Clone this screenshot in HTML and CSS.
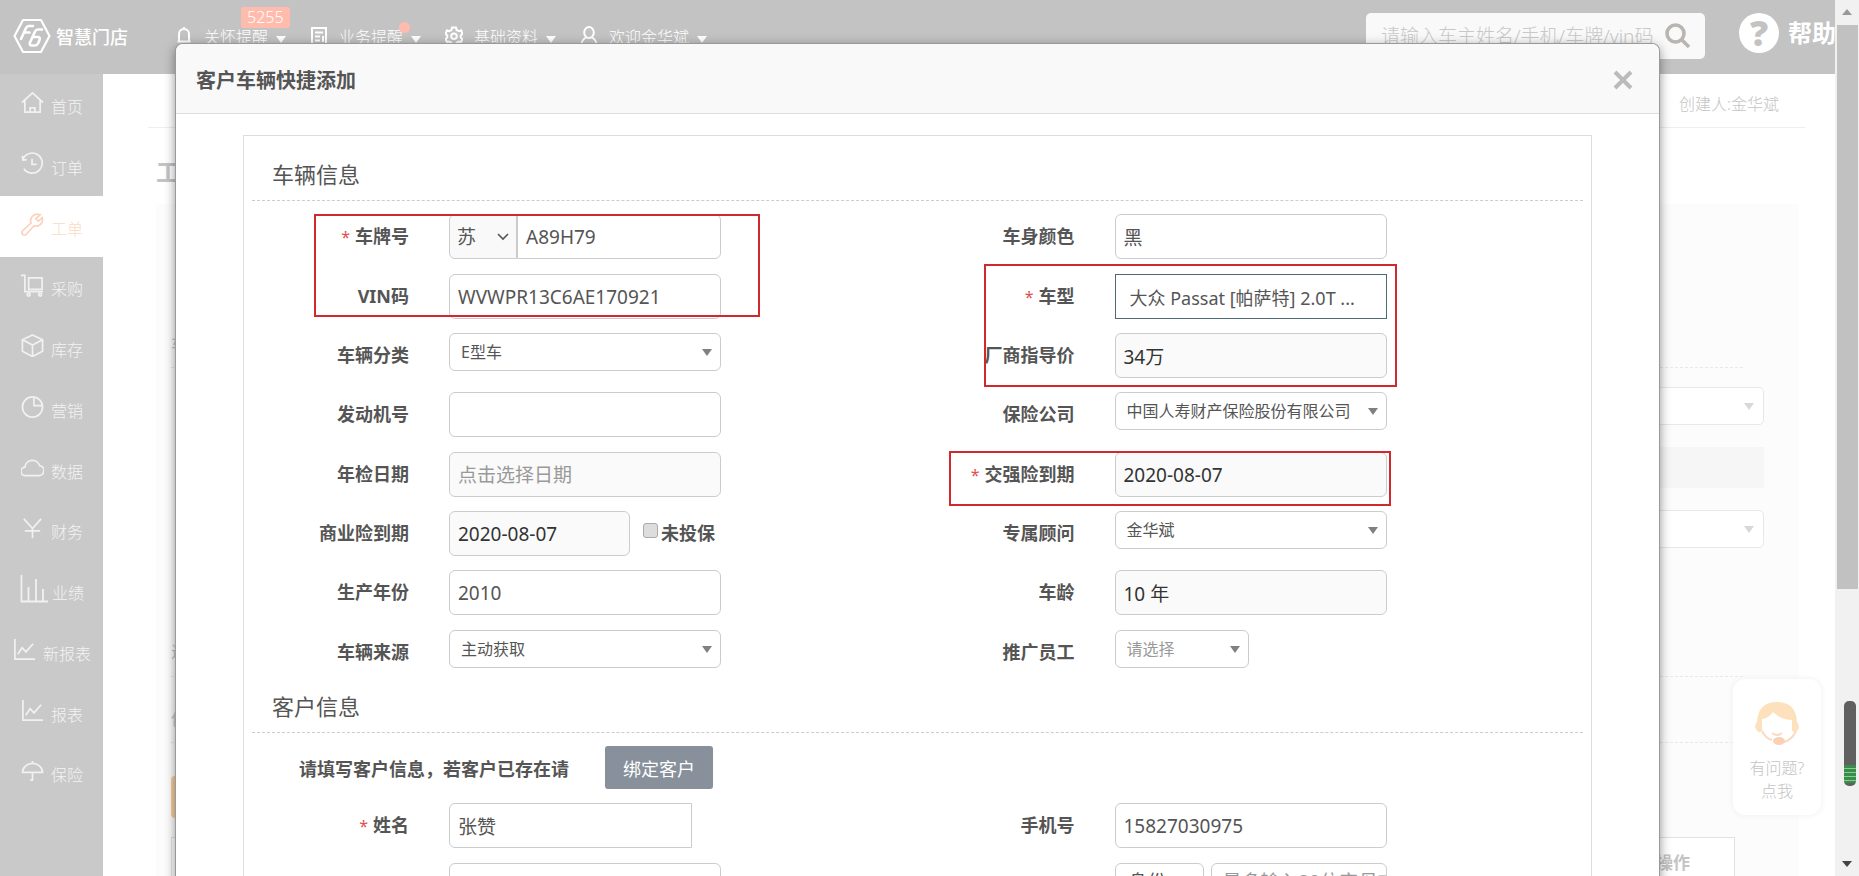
FILE: index.html
```html
<!DOCTYPE html>
<html lang="zh-CN">
<head>
<meta charset="utf-8">
<title>智慧门店</title>
<link rel="stylesheet" href="styles.css">
</head>
<body>
<div class="app">
  <div class="page">
    <header class="topbar">
      <a class="brand" href="#">
        <svg class="brand-mark" viewBox="0 0 38 36" fill="none" stroke="#fff" stroke-width="2.2" stroke-linejoin="round" stroke-linecap="round">
          <path d="M10 2H28L36.500 18L28 34H10L1.500 18Z"/>
          <path d="M8 21L13 10Q14 8 16 8H20M11 14.500H16.500" stroke-width="2.600"/>
          <path d="M29 11.500H25Q23 11.500 22 13.500L17 24.500Q16 27.500 19 27.500H22Q24 27.500 25 25.500L26.500 22Q27.500 19 25 19H20" stroke-width="2.600"/>
        </svg>
        <span>智慧门店</span>
      </a>
      <nav class="topnav">
        <a href="#"><svg viewBox="0 0 18 20"><path d="M2.500 15.500H15.500M4 15V8A5 5 0 0 1 14 8V15M9 1V3M7 18.500H11"/></svg><span>关怀提醒</span><i class="caret"></i><b class="badge">5255</b></a>
        <a href="#"><svg viewBox="0 0 18 20"><path d="M2 2H16V19H2ZM5 6.500H13M5 10.500H10M5 14.500H10M13 10V16"/></svg><span>业务提醒</span><i class="caret"></i><b class="dot"></b></a>
        <a href="#"><svg viewBox="0 0 18 20"><path d="M7 1.500H11L11.600 4L14 5.200L16.200 4.300L17.500 7.800L15.700 9.500V11.500L17.500 13L16 16L13.500 15.500L11.600 16.600L11 19H7L6.400 16.600L4.300 15.500L2 16L.5 13L2.300 11.500V9.500L.5 7.800L2 4.300L4.300 5.200L6.400 4Z"/><circle cx="9" cy="10.300" r="2.800"/></svg><span>基础资料</span><i class="caret"></i></a>
        <a href="#"><svg viewBox="0 0 18 20"><ellipse cx="9" cy="6.500" rx="4.800" ry="5.500"/><path d="M6 11.500Q1.500 14 1.500 19M12 11.500Q16.500 14 16.500 19"/></svg><span>欢迎金华斌</span><i class="caret"></i></a>
      </nav>
      <div class="search">
        <input type="text" aria-label="搜索" placeholder="请输入车主姓名/手机/车牌/vin码">
        <button aria-label="搜索"><svg viewBox="0 0 26 26" fill="none" stroke="#b9b5b1" stroke-width="3.600"><circle cx="10.500" cy="10.500" r="8.500"/><path d="M17 17L24 24"/></svg></button>
      </div>
      <a class="help" href="#"><b class="help-mark">?</b><span>帮助</span></a>
    </header>
    <div class="main">
      <nav class="sidebar">
        <a href="#"><svg viewBox="0 0 24 24"><path d="M1 12L12 2L23 12M4 10V22H20V10M9.500 22V17.500H14.500V22"/></svg>首页</a>
        <a href="#"><svg viewBox="0 0 24 24"><path d="M2 7.500A10.500 10.500 0 1 1 3 17.500M1.500 4L2 8.500L6 8M11.500 7V13H16.500"/></svg>订单</a>
        <a class="active" href="#"><svg viewBox="0 0 24 24"><path d="M20 1.800A7 7 0 0 0 10.500 10.500L1.800 18.500A2.600 2.600 0 0 0 5.500 22.200L13.500 13.500A7 7 0 0 0 22.200 5L18 8.500L15.500 6Z"/></svg>工单</a>
        <a href="#"><svg viewBox="0 0 24 24"><path d="M0 1.500H4V18.500H23M8 4H22V16H8Z"/><circle cx="8" cy="21.500" r="1.500"/><circle cx="20" cy="21.500" r="1.500"/></svg>采购</a>
        <a href="#"><svg viewBox="0 0 24 24"><path d="M12 1L22.500 6V18L12 23.500L1.500 18V6ZM1.500 6L12 11.500L22.500 6M12 11.500V23.500"/></svg>库存</a>
        <a href="#"><svg viewBox="0 0 24 24"><circle cx="12" cy="12.500" r="10.500"/><path d="M13.500 2V11H22.500"/></svg>营销</a>
        <a href="#"><svg viewBox="0 0 24 24"><path d="M5 20.500A4.500 4.500 0 0 1 4 11.500A8 8 0 0 1 19.500 10A5.300 5.300 0 0 1 19 20.500Z"/></svg>数据</a>
        <a href="#"><svg viewBox="0 0 24 24"><path d="M3 2L12 12L21 2M12 12V22M4 14.500H20"/></svg>财务</a>
        <a class="chart" href="#"><svg viewBox="0 0 28 28"><path d="M1.500 0V26.500H28M8.500 26V12M16 26V4M23 26V14"/></svg>业绩</a>
        <a href="#"><svg viewBox="0 0 24 24"><path d="M2 1V22H23M5 17L9.500 10L13.500 14.500L21 6"/></svg>新报表</a>
        <a href="#"><svg viewBox="0 0 24 24"><path d="M2 1V22H23M5 17L9.500 10L13.500 14.500L21 6"/></svg>报表</a>
        <a href="#"><svg viewBox="0 0 24 24"><path d="M1.500 13A10.500 9.500 0 0 1 22.500 13ZM12 1V3.500M12 13V21H9.500"/></svg>保险</a>
      </nav>
      <div class="workspace">
        <div class="creator">创建人:金华斌</div>
        <h1>工单</h1>
        <div class="order">
          <div class="order-top">车</div>
          <div class="fake-select"><i class="caret"></i></div>
          <div class="fake-block"></div>
          <div class="fake-select"><i class="caret"></i></div>
          <div class="order-line first">进</div>
          <div class="order-line">信</div>
          <div class="order-action"><button aria-label="保存"></button></div>
          <table><tr><th>操作</th></tr></table>
        </div>
      </div>
    </div>

    <aside class="support">
      <svg viewBox="0 0 46 46">
        <path d="M3 22Q4 2 23 2T43 22Q47 27 43 31Q41 33 38 31V20Q27 20 19 12Q15 18 8 19V31Q4 34 2 29Q0 25 3 22Z" fill="#fde1bd"/>
        <path d="M8 31Q11 38 18 40M42 31Q38 40 30 42M18 33Q23 37 28 33" fill="none" stroke="#fbdcc2" stroke-width="2"/>
        <ellipse cx="25" cy="41" rx="6" ry="4" fill="#fbd0b4"/>
      </svg>
      <span>有问题?</span><span>点我</span>
    </aside>

    <section class="modal" role="dialog" aria-labelledby="dlg-title">
      <header class="modal-head">
        <h2 id="dlg-title">客户车辆快捷添加</h2>
        <button class="close" aria-label="关闭"><svg viewBox="0 0 20 20"><path d="M2 2L18 18M18 2L2 18"/></svg></button>
      </header>
      <form class="panel">
        <h3>车辆信息</h3>
        <div class="fields">
          <div class="field"><label for="plate"><em>*</em>车牌号</label>
            <div class="plate"><select aria-label="省份"><option>苏</option></select><svg viewBox="0 0 12 8"><path d="M1 1L6 6L11 1"/></svg><input id="plate" type="text" value="A89H79"></div></div>
          <div class="field"><label for="color">车身颜色</label><input id="color" type="text" value="黑"></div>
          <div class="field"><label for="vin">VIN码</label><input id="vin" type="text" value="WVWPR13C6AE170921"></div>
          <div class="field"><label for="model"><em>*</em>车型</label><input id="model" class="model" type="text" value="大众 Passat [帕萨特] 2.0T ..."></div>
          <div class="field"><label for="kind">车辆分类</label><div class="pick"><select id="kind"><option>E型车</option></select><i class="caret"></i></div></div>
          <div class="field"><label for="price">厂商指导价</label><input id="price" type="text" readonly value="34万"></div>
          <div class="field"><label for="engine">发动机号</label><input id="engine" type="text"></div>
          <div class="field"><label for="insurer">保险公司</label><div class="pick"><select id="insurer"><option>中国人寿财产保险股份有限公司</option></select><i class="caret"></i></div></div>
          <div class="field"><label for="check">年检日期</label><input id="check" type="text" readonly placeholder="点击选择日期"></div>
          <div class="field"><label for="force"><em>*</em>交强险到期</label><input id="force" type="text" readonly value="2020-08-07"></div>
          <div class="field"><label for="biz">商业险到期</label><div class="with-check"><input id="biz" type="text" readonly value="2020-08-07"><input id="none" type="checkbox"><label for="none">未投保</label></div></div>
          <div class="field"><label for="adviser">专属顾问</label><div class="pick"><select id="adviser"><option>金华斌</option></select><i class="caret"></i></div></div>
          <div class="field"><label for="year">生产年份</label><input id="year" type="text" value="2010"></div>
          <div class="field"><label for="age">车龄</label><input id="age" type="text" readonly value="10 年"></div>
          <div class="field"><label for="source">车辆来源</label><div class="pick"><select id="source"><option>主动获取</option></select><i class="caret"></i></div></div>
          <div class="field"><label for="staff">推广员工</label><div class="pick short"><select id="staff"><option>请选择</option></select><i class="caret"></i></div></div>
        </div>
        <h3>客户信息</h3>
        <div class="bind"><span>请填写客户信息，若客户已存在请</span><button type="button">绑定客户</button></div>
        <div class="fields">
          <div class="field"><label for="name"><em>*</em>姓名</label><input id="name" class="name" type="text" value="张赞"></div>
          <div class="field"><label for="phone">手机号</label><input id="phone" type="text" value="15827030975"></div>
          <div class="field"><span></span><input type="text" aria-label="备注"></div>
          <div class="field"><span></span><div class="idcard"><select aria-label="证件类型"><option>身份</option></select><input type="text" aria-label="证件号" placeholder="最多输入20位字母或数字"></div></div>
        </div>
        <div class="mark mark-plate"></div>
        <div class="mark mark-model"></div>
        <div class="mark mark-force"></div>
      </form>
    </section>
  </div>
  <div class="scrollbar">
    <i class="arrow up"></i>
    <div class="thumb"></div>
    <i class="arrow down"></i>
    <div class="meter"></div>
  </div>
</div>
</body>
</html>
```
FILE: styles.css
```css
* { box-sizing: border-box; }
body {
  margin: 0;
  font-family: "Noto Sans", "Noto Sans CJK SC", sans-serif;
  font-size: 16px;
  color: #555;
  overflow: hidden;
}
a { color: inherit; text-decoration: none; }
input, select, button { font-family: inherit; margin: 0; }
h1, h2, h3 { margin: 0; }

.app { display: grid; grid-template-columns: 1fr 24px; height: 100vh; }
.page { position: relative; overflow: hidden; background: #fff; }
.caret {
  width: 0; height: 0;
  border: 5px solid transparent;
  border-top: 7px solid currentColor;
  border-bottom: 0;
}

/* top bar */
.topbar { display: flex; height: 74px; background: #c3c3c3; color: #fff; }
.brand { display: flex; align-items: center; gap: 5px; width: 175px; height: 71px; padding-left: 13px; font-size: 18px; font-weight: 500; }
.brand-mark { width: 38px; height: 36px; }
.topnav { display: flex; gap: 24px; height: 72px; font-weight: 300; }
.topnav a { position: relative; display: flex; align-items: center; white-space: nowrap; }
.topnav svg { width: 18px; height: 20px; margin-right: 11px; fill: none; stroke: #fff; stroke-width: 2; }
.topnav .caret { margin: 7px 0 0 8px; }
.badge { position: absolute; left: 66px; top: 7px; padding: 0 6px; line-height: 21px; border-radius: 3px; background: #ffbcad; font-weight: 300; }
.dot { position: absolute; left: 89px; top: 22px; width: 11px; height: 11px; border-radius: 50%; background: #ffbcad; }
.search { display: flex; align-items: center; width: 339px; height: 46px; margin: 13px 34px 0 auto; border-radius: 5px; background: #f9f9f9; }
.search input { flex: 1; min-width: 0; padding: 0 0 0 15px; border: 0; background: none; font-size: 19px; font-weight: 300; }
.search input::placeholder { color: #c8c8c8; }
.search button { height: 26px; padding: 0; margin-right: 14px; border: 0; background: none; }
.search svg { width: 26px; height: 26px; }
.help { display: flex; align-items: center; gap: 9px; width: 96px; height: 66px; overflow: hidden; font-size: 24px; font-weight: 700; line-height: 34px; white-space: nowrap; }
.help-mark { flex: none; width: 40px; height: 40px; border-radius: 50%; background: #fff; color: #c3c3c3; font-size: 36px; line-height: 40px; text-align: center; }

/* side bar */
.main { display: flex; height: calc(100vh - 74px); }
.sidebar { display: grid; grid-auto-rows: 61px 61px 61px 60px; align-content: start; width: 103px; background: #c9c9c9; color: #f3f3f3; font-weight: 300; }
.sidebar a { display: flex; align-items: center; justify-content: center; gap: 7px; padding: 2px 0 0 1px; }
.sidebar svg { width: 23px; height: 23px; margin-bottom: 6px; fill: none; stroke: #f1f1f1; stroke-width: 1.8; }
.sidebar .chart svg { width: 28px; height: 28px; margin-right: -3px; }
.sidebar .active { background: #fff; color: #fbdcc0; }
.sidebar .active svg { stroke: #fbd3bd; }

/* page behind the dialog */
.workspace { flex: 1; padding: 0 30px 0 45px; color: #c4c4c4; }
.creator { height: 54px; padding: 0 26px 0 0; border-bottom: 1px solid #eee; line-height: 61px; text-align: right; font-size: 16px; font-weight: 300; }
.workspace h1 { height: 76px; padding-left: 8px; font-size: 24px; line-height: 88px; }
.order { margin: 0 6px 0 8px; padding: 0 35px 0 15px; background: #fcfcfc; }
.order-top { height: 164px; margin-right: 21px; padding-top: 127px; border-bottom: 1px dashed #e8e8e8; }
.fake-select { display: flex; align-items: center; justify-content: flex-end; height: 38px; margin: 19px 0 0 30px; padding-right: 9px; border: 1px solid #e8e8e8; border-radius: 5px; background: #fff; color: #d8d8d8; }
.fake-block { height: 41px; margin: 22px 0 22px 30px; background: #f6f6f6; }
.order-line { height: 66px; margin-right: 21px; border-bottom: 1px dashed #e8e8e8; line-height: 84px; }
.order-line.first { height: 129px; line-height: 208px; }
.order-action { padding: 33px 0 19px; }
.order-action button { display: block; width: 90px; height: 42px; border: 0; border-radius: 4px; background: #f6cf9c; }
.order table { width: 1564px; border: 1px solid #e2e2e2; background: #fff; font-size: 17px; }
.order th { height: 42px; padding: 0 42px 0 0; text-align: right; }

.support { position: absolute; right: 14px; top: 679px; display: flex; flex-direction: column; align-items: center; width: 88px; height: 136px; padding-top: 21px; border-radius: 12px; background: #fff; box-shadow: 0 0 6px #eee; color: #c4c4c4; font-weight: 300; line-height: 23px; }
.support svg { width: 46px; height: 46px; margin-bottom: 11px; }

/* dialog */
.modal { position: absolute; left: 176px; right: 176px; top: 44px; border-radius: 7px 7px 0 0; background: #fff; box-shadow: 0 0 0 1px #999, 0 3px 12px rgba(0, 0, 0, .5); }
.modal-head { display: flex; align-items: center; justify-content: space-between; height: 70px; padding: 2px 26px 0 20px; border-bottom: 1px solid #ddd; border-radius: 7px 7px 0 0; background: #f9f9f9; }
.modal-head h2 { font-size: 20px; }
.close { height: 20px; padding: 0; border: 0; background: none; }
.close svg { width: 20px; height: 20px; fill: none; stroke: #bbb; stroke-width: 4; }

.panel { position: relative; margin: 21px 67px; padding: 21px 8px 0; border: 1px solid #ddd; }
.panel h3 { padding: 2px 0 11px 20px; margin-bottom: 13px; border-bottom: 1px dashed #ccc; font-size: 22px; font-weight: 400; line-height: 30px; }
.fields { display: grid; grid-template-columns: 1fr 1fr; grid-auto-rows: 60px 59px 59px; }
.field { display: grid; grid-template-columns: 157px 272px; column-gap: 40px; align-items: start; }
.field > label { font-size: 18px; font-weight: 700; line-height: 45px; text-align: right; white-space: nowrap; }
.field em { margin-right: 5px; color: #e05050; font-size: 16px; font-style: normal; font-weight: 400; }
.field input, .field select { width: 100%; height: 45px; padding: 0 8px; border: 1px solid #ccc; border-radius: 6px; background: #fff; color: #555; font-size: 19px; outline: 0; }
.field input[readonly] { background: #fafafa; color: #333; }
.field input::placeholder { color: #999; }
.field select { appearance: none; }
.field .model { padding: 0 14px; border-color: #4f6878; border-radius: 0; font-size: 18px; }
.field .name { width: 243px; border-radius: 6px 0 0 6px; }
.pick { position: relative; color: #808080; }
.field .pick select { height: 38px; padding: 0 11px; font-size: 16px; }
.pick .caret { position: absolute; right: 9px; top: 16px; }
.pick.short { width: 134px; }
.field .pick.short select { color: #999; }
.plate { position: relative; display: grid; grid-template-columns: 68px 1fr; }
.field .plate select { border-radius: 6px 0 0 6px; background: #f9f9f9; padding: 0 7px; }
.field .plate input { border-radius: 0 6px 6px 0; }
.plate svg { position: absolute; left: 48px; top: 19px; width: 12px; height: 8px; fill: none; stroke: #555; stroke-width: 1.600; pointer-events: none; }
.with-check { display: flex; }
.field .with-check input[type="text"] { width: 181px; }
.field .with-check input[type="checkbox"] { appearance: none; width: 15px; height: 15px; margin: 12px 3px 0 13px; padding: 0; border: 1px solid #aaa; border-radius: 3px; background: #ddd; }
.with-check label { font-size: 18px; font-weight: 700; line-height: 45px; }
.idcard { display: grid; grid-template-columns: 89px 1fr; gap: 7px; }
.field .idcard select { height: 38px; padding: 0 13px; }
.field .idcard input { height: 38px; padding: 0 0 0 11px; }
.bind { display: flex; align-items: center; gap: 36px; padding-left: 47px; margin-bottom: 14px; font-size: 18px; font-weight: 700; }
.bind button { width: 108px; height: 43px; padding: 0; border: 0; border-radius: 3px; background: #87909b; color: #fff; font-size: 18px; }

.mark { position: absolute; border: 2px solid #d0282c; pointer-events: none; }
.mark-plate { left: 70px; top: 78px; width: 446px; height: 103px; }
.mark-model { left: calc(50% + 66px); top: 128px; width: 413px; height: 123px; }
.mark-force { left: calc(50% + 31px); top: 315px; width: 442px; height: 55px; }

/* window scroll bar */
.scrollbar { position: relative; display: flex; flex-direction: column; align-items: center; padding: 9px 0 9px; background: #f1f1f1; }
.arrow { border: 5px solid transparent; }
.arrow.up { border-top: 0; border-bottom: 6px solid #999; }
.arrow.down { margin-top: auto; border-bottom: 0; border-top: 6px solid #444; }
.thumb { width: 21px; height: 564px; margin-top: 10px; background: #c1c1c1; }
.meter { position: absolute; left: 9px; top: 701px; width: 12px; height: 85px; border-radius: 5px; background: linear-gradient(#606060 64px, transparent 64px, transparent 82px, #606060 82px), repeating-linear-gradient(#3c8a4c 0 3px, #7fd08a 3px 4px); }
```
